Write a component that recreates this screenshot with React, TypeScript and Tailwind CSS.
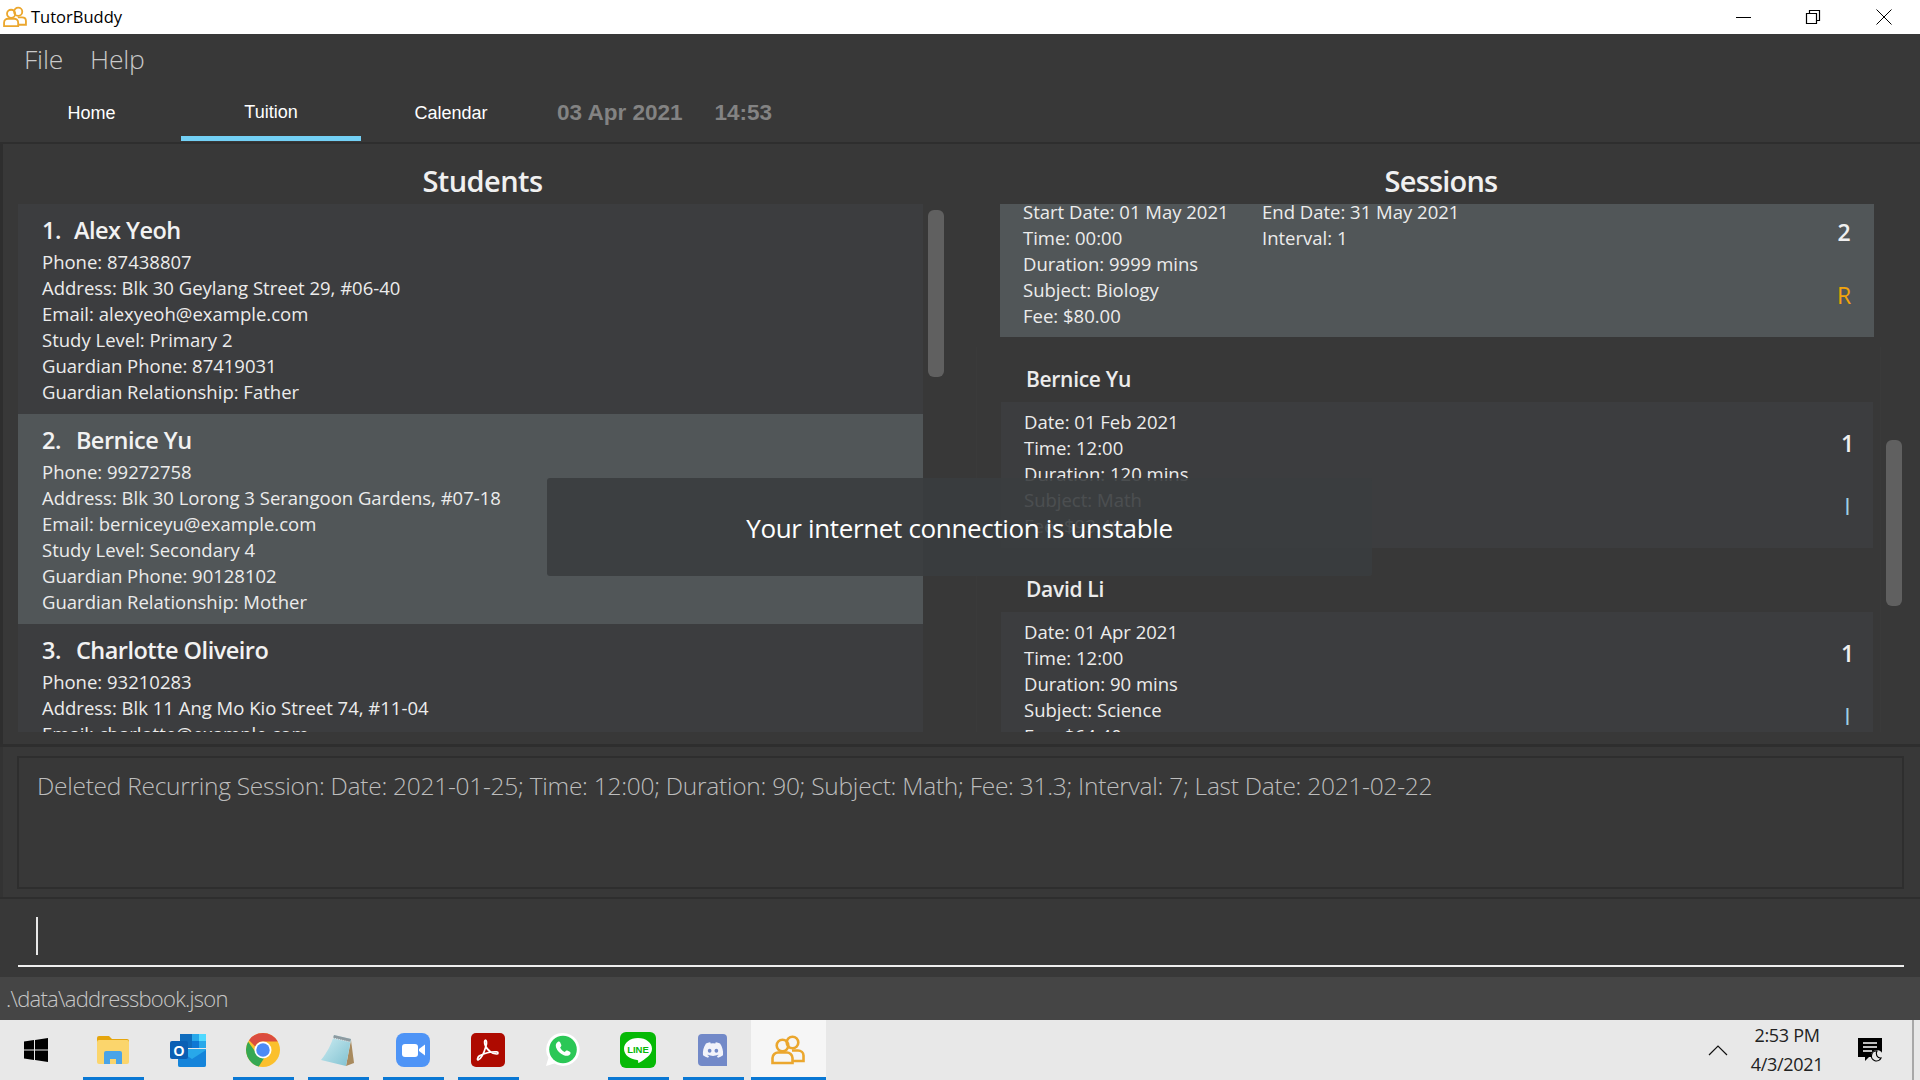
import React from "react";
import { FaDiscord } from "react-icons/fa";

const UI = "font-['Open_Sans',sans-serif]";

function People({ s }: { s: number }) {
  return (
    <svg width={s} height={s} viewBox="0 0 34 30" fill="none" stroke="#eba72e" strokeWidth="2.6">
      <circle cx="21.5" cy="7.5" r="5.8" />
      <circle cx="11.5" cy="10.5" r="5.8" />
      <path d="M1.5 28v-5c0-3.5 3-5.5 5.5-5.5h9c2.5 0 5.5 2 5.500 5.500v5z" />
      <path d="M21 15.500h6c3 0 5.500 2 5.500 5v5.500h-11" />
    </svg>
  );
}

function Student({ n, name, lines, selected, gap }: { n: number; name: string; lines: string[]; selected?: boolean; gap: string }) {
  return (
    <div className={`shrink-0 h-[210px] pl-[24px] pt-[9px] ${selected ? "bg-[#515658]" : "bg-[#3c3d3f]"}`}>
      <div className="h-[36px] flex items-center text-[23.5px] font-semibold text-[#f2f2f2] tracking-[-0.5px]">
        <span>{n}.</span>
        <span className={gap}>{name}</span>
      </div>
      <div className="text-[18.5px] leading-[26px] text-[#ececec] font-normal">
        {lines.map((l) => (
          <div key={l}>{l}</div>
        ))}
      </div>
    </div>
  );
}

function SessionCard({ title, lines, badge, extra, selected, h, up }: { title?: string; lines: string[]; badge: string; extra?: string[]; selected?: boolean; h: string; up?: boolean }) {
  return (
    <div className={`${h} ml-[24px] mr-[7px] shrink-0 flex overflow-hidden ${selected ? "bg-[#515658]" : "bg-[#3c3d3f]"}`}>
      <div className={`w-[262px] pl-[23px] ${up ? "-mt-[5px]" : "pt-[7px]"} text-[18.5px] leading-[26px] text-[#ececec]`}>
        {lines.map((l) => (
          <div key={l} className="whitespace-nowrap">{l}</div>
        ))}
      </div>
      <div className={`flex-1 ${up ? "-mt-[5px]" : "pt-[7px]"} text-[18.5px] leading-[26px] text-[#ececec]`}>
        {extra?.map((l) => (
          <div key={l} className="whitespace-nowrap">{l}</div>
        ))}
      </div>
      <div className={`w-[60px] flex flex-col items-center ${up ? "" : "pl-[9px]"}`}>
        <div className={`${up ? "mt-[13px]" : "mt-[26px]"} h-[30px] flex items-center text-[23px] font-semibold text-[#efefef]`}>{title}</div>
        <div className="mt-[33px] h-[30px] flex items-center text-[23px] font-medium">
          <span className={badge === "R" ? "text-[#f3a40b]" : "text-[#9fd0e6]"}>{badge}</span>
        </div>
      </div>
    </div>
  );
}

function Slot({ on, active, children }: { on?: boolean; active?: boolean; children: React.ReactNode }) {
  return (
    <div className={`relative w-[75px] h-[60px] flex items-center justify-center pr-[2px] ${active ? "bg-[#f6f6f6]" : ""}`}>
      {children}
      {on && <div className={`absolute bottom-0 h-[3px] bg-[#0a78d4] ${active ? "left-0 right-0" : "left-[7px] right-[7px]"}`} />}
    </div>
  );
}

export default function App() {
  return (
    <div className={`w-[1920px] h-[1080px] overflow-hidden relative flex flex-col bg-[#383838] ${UI}`}>
      {/* title bar */}
      <div className="h-[34px] bg-white flex items-center shrink-0">
        <div className="ml-[3px]">
          <People s={24} />
        </div>
        <span className="ml-[4px] text-[16.5px] text-black">TutorBuddy</span>
        <div className="flex-1" />
        <svg width="16" height="16" viewBox="0 0 16 16" className="mr-[53px]" fill="none" stroke="#000">
          <path d="M0 8.500h15" />
        </svg>
        <svg width="16" height="16" viewBox="0 0 16 16" className="mr-[55px]" fill="none" stroke="#000" strokeWidth="1.2">
          <path d="M1.500 4.500h10v10h-10zM4.500 4.500v-3h10v10h-3" />
        </svg>
        <svg width="16" height="16" viewBox="0 0 16 16" className="mr-[28px]" fill="none" stroke="#000">
          <path d="M.5.500l15 15M15.500.500l-15 15" />
        </svg>
      </div>
      {/* menu */}
      <div className="h-[51px] shrink-0 flex items-center pl-[24px] gap-[27px] text-[26.5px] text-[#c9c9c9] font-light tracking-[-0.2px]">
        <span>File</span>
        <span>Help</span>
      </div>
      {/* tabs */}
      <div className="h-[57px] shrink-0 flex items-start pl-[2px] font-['Liberation_Sans',sans-serif]">
        <div className="w-[179px] h-[56px] flex items-center justify-center text-[18px] text-white">Home</div>
        <div className="w-[180px] h-[56px] pt-[4px] border-b-[5px] border-[#73d0f5] flex items-center justify-center text-[18px] text-white">Tuition</div>
        <div className="w-[180px] h-[56px] flex items-center justify-center text-[18px] text-white">Calendar</div>
        <div className="h-[55px] flex items-center ml-[16px] text-[22.5px] font-bold text-[#838383]">
          <span>03 Apr 2021</span>
          <span className="ml-[32px]">14:53</span>
        </div>
      </div>
      {/* main */}
      <div className="h-[605px] shrink-0 border-t-2 border-[#2e2e2e] border-l-[3px] border-b-[3px] flex pl-[15px]">
        <div className="w-[905px] shrink-0">
          <div className="h-[60px] flex items-center justify-center text-[29px] font-semibold text-[#f0f0f0] tracking-[-0.55px] pl-[24px] pt-[13px]">Students</div>
          <div className="h-[528px] overflow-hidden flex flex-col">
            <Student n={1} name="Alex Yeoh" gap="ml-[13px]" lines={["Phone: 87438807", "Address: Blk 30 Geylang Street 29, #06-40", "Email: alexyeoh@example.com", "Study Level: Primary 2", "Guardian Phone: 87419031", "Guardian Relationship: Father"]} />
            <Student n={2} name="Bernice Yu" selected gap="ml-[15px]" lines={["Phone: 99272758", "Address: Blk 30 Lorong 3 Serangoon Gardens, #07-18", "Email: berniceyu@example.com", "Study Level: Secondary 4", "Guardian Phone: 90128102", "Guardian Relationship: Mother"]} />
            <Student n={3} name="Charlotte Oliveiro" gap="ml-[15px]" lines={["Phone: 93210283", "Address: Blk 11 Ang Mo Kio Street 74, #11-04", "Email: charlotte@example.com"]} />
          </div>
        </div>
        <div className="ml-[5px] w-[16px] pt-[66px] shrink-0">
          <div className="h-[167px] rounded-[6px] bg-[#606060]" />
        </div>
        <div className="ml-[32px] w-[905px] shrink-0">
          <div className="h-[60px] flex items-center justify-center text-[29px] font-semibold text-[#f0f0f0] tracking-[-0.8px] pt-[13px] pl-[25px]">Sessions</div>
          <div className="h-[528px] overflow-hidden flex flex-col">
            <div className="h-[143px] shrink-0">
              <SessionCard up h="h-[133px]" selected title="2" badge="R" lines={["Start Date: 01 May 2021", "Time: 00:00", "Duration: 9999 mins", "Subject: Biology", "Fee: $80.00"]} extra={["End Date: 31 May 2021", "Interval: 1"]} />
            </div>
            <div className="h-[210px] shrink-0 border-x border-[#3a3a3a]">
              <div className="h-[55px] pl-[49px] pt-[10px] flex items-center text-[21px] font-semibold text-[#ececec] tracking-[-0.3px]">Bernice Yu</div>
              <SessionCard h="h-[146px]" title="1" badge="I" lines={["Date: 01 Feb 2021", "Time: 12:00", "Duration: 120 mins", "Subject: Math", "Fee: $93.40"]} />
            </div>
            <div className="h-[210px] shrink-0 border-x border-[#3a3a3a]">
              <div className="h-[55px] pl-[49px] pt-[10px] flex items-center text-[21px] font-semibold text-[#ececec] tracking-[-0.3px]">David Li</div>
              <SessionCard h="h-[146px]" title="1" badge="I" lines={["Date: 01 Apr 2021", "Time: 12:00", "Duration: 90 mins", "Subject: Science", "Fee: $64.40"]} />
            </div>
          </div>
        </div>
        <div className="ml-[5px] w-[16px] pt-[296px] shrink-0">
          <div className="h-[166px] rounded-[6px] bg-[#606060]" />
        </div>
      </div>
      {/* result */}
      <div className="h-[150px] shrink-0 pl-[14px] pr-[16px] pt-[9px] border-l-[3px] border-[#333]">
        <div className="h-[133px] border-2 border-[#2e2e2e] pl-[18px] pt-[10px] text-[24.5px] text-[#bdbdbd] font-light tracking-[-0.27px] whitespace-nowrap">
          Deleted Recurring Session: Date: 2021-01-25; Time: 12:00; Duration: 90; Subject: Math; Fee: 31.3; Interval: 7; Last Date: 2021-02-22
        </div>
      </div>
      {/* command */}
      <div className="h-[80px] shrink-0 border-t-2 border-[#2e2e2e] pl-[18px] pr-[16px] pt-[6px]">
        <div className="h-[62px] border-b-2 border-[#efefef] pl-[18px] pt-[12px]">
          <div className="w-[2px] h-[38px] bg-[#e8e8e8]" />
        </div>
      </div>
      {/* status */}
      <div className="h-[43px] shrink-0 bg-[#454545] flex items-center pl-[6px] text-[22px] text-[#c8c8c8] font-light tracking-[-0.75px]">.\data\addressbook.json</div>
      {/* taskbar */}
      <div className="h-[60px] shrink-0 bg-[#e8e8e8] flex items-center">
        <div className="w-[76px] h-[60px] flex items-center justify-center pr-[4px]">
          <svg width="24" height="24" viewBox="0 0 24 24" fill="#000">
            <path d="M0 3.500l10-1.400v9.400H0zM11 2l13-2v11.500H11zM0 12.500h10v9.400L0 20.500zM11 12.500h13V24l-13-2z" />
          </svg>
        </div>
        <Slot on>
          <svg width="34" height="30" viewBox="0 0 34 30">
            <path d="M1 3a2 2 0 012-2h10l3 3h15a2 2 0 012 2v4H1z" fill="#e5a50d" />
            <rect x="1" y="5" width="32" height="24" rx="2" fill="#fbd56c" />
            <path d="M8 29v-11a2 2 0 012-2h14a2 2 0 012 2v11h-6v-5h-6v5z" fill="#4aa4e8" />
          </svg>
        </Slot>
        <Slot>
          <svg width="36" height="34" viewBox="0 0 36 34">
            <path d="M10 1h22l4 0v14H10z" fill="#0f6cbd" />
            <path d="M22 1h7v7h-7z" fill="#28a8ea" />
            <path d="M29 1h7v7h-7z" fill="#50d9ff" />
            <path d="M22 8h7v7h-7z" fill="#0f78d4" />
            <path d="M29 8h7v7h-7z" fill="#28a8ea" />
            <path d="M8 16h28v16a2 2 0 01-2 2H10a2 2 0 01-2-2z" fill="#28a8ea" />
            <path d="M8 17l14 9 14-9v15a2 2 0 01-2 2H10a2 2 0 01-2-2z" fill="#0f78d4" opacity="0.75" />
            <rect x="0" y="8" width="18" height="18" rx="2" fill="#0a5fb4" />
            <text x="9" y="22.500" textAnchor="middle" fontSize="14" fontWeight="700" fill="#fff" fontFamily="Liberation Sans">O</text>
          </svg>
        </Slot>
        <Slot on>
          <svg width="34" height="34" viewBox="0 0 48 48">
            <circle cx="24" cy="24" r="24" fill="#fbc02d" />
            <path d="M24 0a24 24 0 0120.800 12H24a12 12 0 00-11 7L4.300 10.200A24 24 0 0124 0z" fill="#db4c3f" />
            <path d="M3 12.500A24 24 0 0018 47.300L27 33a12 12 0 01-14-7z" fill="#35a853" />
            <circle cx="24" cy="24" r="12" fill="#fff" />
            <circle cx="24" cy="24" r="9.500" fill="#4b8bf5" />
          </svg>
        </Slot>
        <Slot on>
          <svg width="34" height="34" viewBox="0 0 34 34">
            <defs>
              <linearGradient id="np" x1="0" y1="0" x2="1" y2="1">
                <stop offset="0" stopColor="#cfeef3" />
                <stop offset="1" stopColor="#7fc0d0" />
              </linearGradient>
            </defs>
            <path d="M30 7l3 23-8 3z" fill="#a88a5e" />
            <path d="M13 2l17 4-5 27-25-6C6 20 11 10 13 2z" fill="url(#np)" />
            <path d="M13 2l17 4-1 3-17-4z" fill="#8d9aa0" />
            <path d="M12 5l17 4" stroke="#e8e8e8" strokeWidth="1" strokeDasharray="1 1" />
          </svg>
        </Slot>
        <Slot on>
          <svg width="34" height="34" viewBox="0 0 34 34">
            <rect width="34" height="34" rx="8" fill="#4e94f6" />
            <rect x="6" y="11" width="16" height="13" rx="3" fill="#fff" />
            <path d="M23 16l6-4.500v11L23 18z" fill="#fff" />
          </svg>
        </Slot>
        <Slot on>
          <svg width="34" height="34" viewBox="0 0 34 34">
            <rect width="34" height="34" rx="5" fill="#ae0a00" />
            <path d="M7 27c3-1 6-7 8-14 1-3 .5-6-.500-6s-1.500 3 0 6c2 4 5 7 11 8 2 0 2-2 0-2.200-5-.3-11 1-17 4-2 1.500-2.500 4-1.500 4.200z" fill="none" stroke="#fff" strokeWidth="1.700" />
          </svg>
        </Slot>
        <Slot>
          <svg width="34" height="34" viewBox="0 0 32 32">
            <path d="M16 0a15.500 15.500 0 11-8 28.700L0 31l2.300-7.800A15.500 15.500 0 0116 0z" fill="#fff" />
            <circle cx="16" cy="15.500" r="13" fill="#2bc756" />
            <path d="M11 8.500c1-.8 2-.5 2.400.5l1 2.200c.2.6 0 1-.3 1.400l-.8 1c1 2 2.300 3.300 4.400 4.300l1.100-1.200c.4-.4.900-.4 1.300-.2l2.300 1.100c.8.400 1 1.300.3 2.300-1.300 1.800-3.500 2-6 1-3.700-1.500-6-4-7.200-7.300-.7-2.300-.1-4 1.500-5.100z" fill="#fff" />
          </svg>
        </Slot>
        <Slot on>
          <svg width="36" height="36" viewBox="0 0 36 36">
            <rect width="36" height="36" rx="6" fill="#06b906" />
            <path d="M18 6c8 0 14 4.800 14 10.800 0 6-7 10.500-13 14-1 .5-1-.7-.8-1.500.1-.7-.1-1.300-1-1.400C10 27.500 4 23 4 16.800 4 10.800 10 6 18 6z" fill="#fff" />
            <text x="18" y="20.500" textAnchor="middle" fontSize="9.500" fontWeight="700" fill="#06b906" fontFamily="Liberation Sans">LINE</text>
          </svg>
        </Slot>
        <Slot on>
          <div className="w-[29px] h-[32px] rounded-[4px] rounded-br-none bg-[#7289c8] flex items-center justify-center">
            <FaDiscord size={22} color="#f2f3fa" />
          </div>
        </Slot>
        <Slot on active>
          <People s={34} />
        </Slot>
        <div className="flex-1" />
        <svg width="20" height="12" viewBox="0 0 20 12" fill="none" stroke="#111" strokeWidth="1.200" className="mr-[19px]">
          <path d="M1 11l9-9 9 9" />
        </svg>
        <div className="w-[80px] text-center text-[18px] leading-[29px] text-[#222] tracking-[-0.3px]">
          <div>2:53 PM</div>
          <div>4/3/2021</div>
        </div>
        <svg width="26" height="26" viewBox="0 0 26 26" className="ml-[30px]">
          <path d="M1 1h24v19H12l-4 4v-4H1z" fill="#000" />
          <path d="M6 6h14M6 10h14M6 14h9" stroke="#fff" strokeWidth="1.300" />
          <circle cx="20" cy="19" r="6" fill="#e8e8e8" />
          <path d="M20 14a5 5 0 104 7 4.500 4.500 0 01-4-7z" fill="none" stroke="#000" strokeWidth="1.200" />
        </svg>
        <div className="ml-[29px] w-[2px] h-[60px] bg-[#a8a8a8]" />
        <div className="w-[6px]" />
      </div>
      {/* toast */}
      <div className="absolute left-[547px] top-[478px] w-[825px] h-[98px] rounded-[3px] bg-[#3a3d3f]/90 flex items-center justify-center pt-[2px] text-[26px] text-white tracking-[-0.35px]">
        Your internet connection is unstable
      </div>
    </div>
  );
}
